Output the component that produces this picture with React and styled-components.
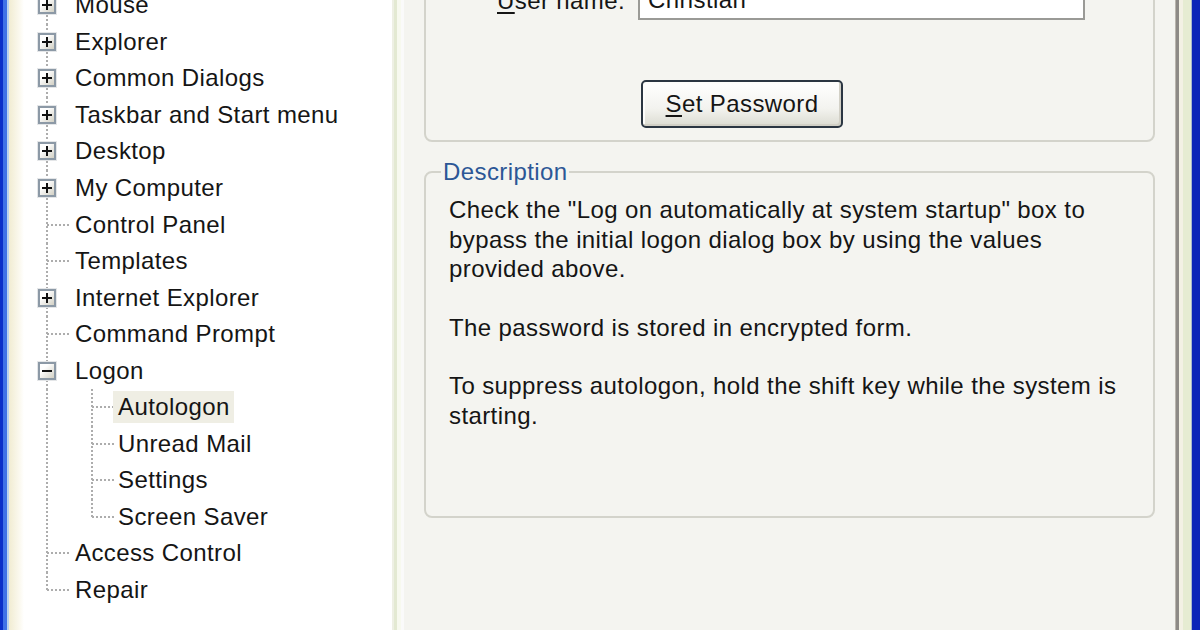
import React from "react";
import styled, { createGlobalStyle } from "styled-components";

const Global = createGlobalStyle`
  html, body { margin: 0; padding: 0; background: #f4f4f0; }
  body { font-family: "Liberation Sans", Arial, sans-serif; }
  #root { width: 1200px; height: 630px; overflow: hidden; }
`;

const Window = styled.div`
  display: flex;
  width: 1200px;
  height: 630px;
  overflow: hidden;
  font-family: "Liberation Sans", Arial, sans-serif;
  font-size: 24px;
  letter-spacing: 0.4px;
  color: #151515;
`;

const FrameLeft = styled.div`
  flex: 0 0 9px;
  background: linear-gradient(to right, #0a2fc8 0 3px, #3f72e6 3px 7px, #b9d3ef 7px 9px);
`;

const FrameInnerLeft = styled.div`
  flex: 0 0 15px;
  background: linear-gradient(to right, #f1ecd2, #fbf9ef 70%, #ffffff);
`;

const TreePanel = styled.div`
  flex: 0 0 368px;
  background: #ffffff;
  overflow: hidden;
`;

const TreeList = styled.ul`
  list-style: none;
  margin: -13px 0 0 0;
  padding: 0;
`;

const Row = styled.li`
  display: flex;
  align-items: center;
  height: 36.55px;
  white-space: nowrap;
`;

const lineColor = "#adadad";
const vFull = `repeating-linear-gradient(to bottom, ${lineColor} 0 2px, transparent 2px 4px)`;
const hLine = `repeating-linear-gradient(to right, ${lineColor} 0 2px, transparent 2px 4px)`;

const Cell = styled.span`
  flex: 0 0 ${(p) => p.$w}px;
  height: 100%;
  display: flex;
  align-items: center;
  justify-content: center;
  background-repeat: no-repeat;
  background-image: ${(p) => {
    const imgs = [];
    if (p.$kind === "pipe" || p.$kind === "tee" || p.$kind === "corner") imgs.push(vFull);
    if (p.$kind === "tee" || p.$kind === "corner") imgs.push(hLine);
    return imgs.length ? imgs.join(", ") : "none";
  }};
  background-size: ${(p) => {
    const s = [];
    if (p.$kind === "pipe" || p.$kind === "tee") s.push("2px 100%");
    if (p.$kind === "corner") s.push("2px 50%");
    if (p.$kind === "tee" || p.$kind === "corner") s.push(`${p.$w / 2}px 2px`);
    return s.join(", ") || "auto";
  }};
  background-position: ${(p) => {
    const s = [];
    const c = `${p.$w / 2 - 1}px`;
    if (p.$kind === "pipe" || p.$kind === "tee" || p.$kind === "corner") s.push(`${c} 0`);
    if (p.$kind === "tee" || p.$kind === "corner") s.push(`${p.$w / 2}px 50%`);
    return s.join(", ") || "0 0";
  }};
`;

const Expander = styled.span`
  position: relative;
  width: 18px;
  height: 18px;
  box-sizing: border-box;
  border: 2px solid #8c99a6;
  box-shadow: 0 0 0 1px #e4e6e8;
  background: linear-gradient(135deg, #ffffff 30%, #d2d0c4);
  display: flex;
  align-items: center;
  justify-content: center;

  &::before {
    content: "";
    width: 10px;
    height: 2px;
    background: #111;
  }
  &::after {
    content: "";
    display: ${(p) => (p.$open ? "none" : "block")};
    position: absolute;
    width: 2px;
    height: 10px;
    left: 6px;
    top: 2px;
    background: #111;
  }
`;

const Label = styled.span`
  padding: 2px 4px 2px 5px;
  margin-left: ${(p) => (p.$child ? "-1px" : "0")};
  background: ${(p) => (p.$selected ? "#efeee4" : "transparent")};
  line-height: 28px;
`;

const Divider = styled.div`
  flex: 0 0 12px;
  background: linear-gradient(to right, #eef0e4 0 2px, #e3e9d2 2px 5px, #f7f9ef 5px 9px, #fafafa 9px);
`;

const RightPanel = styled.div`
  flex: 1 1 auto;
  background: #f4f4f0;
  padding: 0 20px;
  display: flex;
  flex-direction: column;
`;

const FrameRight = styled.div`
  flex: 0 0 25px;
  background: linear-gradient(
    to right,
    #b9b5ad 0 1px,
    #8d8a86 1px 4px,
    #f3f1e4 4px 8px,
    #e6ecd2 8px 16px,
    #a8b6cc 16px 17px,
    #0c24b8 17px
  );
`;

const GroupBox = styled.div`
  margin-top: -50px;
  border: 2px solid #d3d3cb;
  border-radius: 8px;
  padding: 28px 0 12px;
  display: flex;
  flex-direction: column;
  align-items: flex-start;
`;

const FieldRow = styled.div`
  display: flex;
  align-items: center;
  gap: 14px;
  padding-left: 71px;
  height: 40px;
`;

const FieldLabel = styled.label`
  width: 127px;
  white-space: nowrap;
  padding-top: 2px;
`;

const Mnemonic = styled.span`
  text-decoration: underline;
  text-underline-offset: 3px;
`;

const TextInput = styled.div`
  width: 447px;
  height: 40px;
  box-sizing: border-box;
  border: 2px solid #9a9a96;
  background: #ffffff;
  padding: 2px 8px;
  display: flex;
  align-items: center;
`;

const Button = styled.button`
  margin: 60px 0 0 215px;
  width: 202px;
  height: 48px;
  box-sizing: border-box;
  border: 2px solid #2b3642;
  border-radius: 5px;
  background: linear-gradient(to bottom, #ffffff, #f3f3ef 60%, #dcdcd2);
  box-shadow: inset -2px -2px 0 #d2d0c6, inset 2px 2px 0 #fdfdfb;
  font-family: "Liberation Sans", Arial, sans-serif;
  font-size: 24px;
  letter-spacing: 0.4px;
  color: #151515;
  padding: 0;
`;

const DescBox = styled.fieldset`
  margin: 17px 0 0;
  border: 2px solid #d3d3cb;
  border-radius: 8px;
  padding: 10px 14px 0 23px;
  min-width: 0;
  height: 359px;
  box-sizing: border-box;
`;

const Legend = styled.legend`
  color: #2c5796;
  padding: 0 2px;
  margin-left: -8px;
  line-height: 26px;
`;

const Paragraph = styled.p`
  margin: 0 0 29px;
  line-height: 29.5px;
`;

const Line = styled.span`
  display: block;
  white-space: nowrap;
`;

const tree = [
  { label: "Mouse", cells: [{ k: "pipe", box: "closed" }] },
  { label: "Explorer", cells: [{ k: "pipe", box: "closed" }] },
  { label: "Common Dialogs", cells: [{ k: "pipe", box: "closed" }] },
  { label: "Taskbar and Start menu", cells: [{ k: "pipe", box: "closed" }] },
  { label: "Desktop", cells: [{ k: "pipe", box: "closed" }] },
  { label: "My Computer", cells: [{ k: "pipe", box: "closed" }] },
  { label: "Control Panel", cells: [{ k: "tee" }] },
  { label: "Templates", cells: [{ k: "tee" }] },
  { label: "Internet Explorer", cells: [{ k: "pipe", box: "closed" }] },
  { label: "Command Prompt", cells: [{ k: "tee" }] },
  { label: "Logon", cells: [{ k: "pipe", box: "open" }] },
  { label: "Autologon", child: true, selected: true, cells: [{ k: "pipe" }, { k: "tee" }] },
  { label: "Unread Mail", child: true, cells: [{ k: "pipe" }, { k: "tee" }] },
  { label: "Settings", child: true, cells: [{ k: "pipe" }, { k: "tee" }] },
  { label: "Screen Saver", child: true, cells: [{ k: "pipe" }, { k: "corner" }] },
  { label: "Access Control", cells: [{ k: "tee" }] },
  { label: "Repair", cells: [{ k: "corner" }] },
];

const widths = [46, 44];

export default function App() {
  return (
    <>
      <Global />
      <Window>
        <FrameLeft />
        <FrameInnerLeft />
        <TreePanel>
          <TreeList>
            {tree.map((item) => (
              <Row key={item.label}>
                {item.cells.map((c, i) => (
                  <Cell key={i} $kind={c.k} $w={widths[i]}>
                    {c.box && <Expander $open={c.box === "open"} />}
                  </Cell>
                ))}
                <Label $child={item.child} $selected={item.selected}>
                  {item.label}
                </Label>
              </Row>
            ))}
          </TreeList>
        </TreePanel>
        <Divider />
        <RightPanel>
          <GroupBox>
            <FieldRow>
              <FieldLabel>
                <Mnemonic>U</Mnemonic>ser name:
              </FieldLabel>
              <TextInput>Christian</TextInput>
            </FieldRow>
            <Button>
              <Mnemonic>S</Mnemonic>et Password
            </Button>
          </GroupBox>
          <DescBox>
            <Legend>Description</Legend>
            <Paragraph>
              <Line>Check the "Log on automatically at system startup" box to</Line>
              <Line>bypass the initial logon dialog box by using the values</Line>
              <Line>provided above.</Line>
            </Paragraph>
            <Paragraph>
              <Line>The password is stored in encrypted form.</Line>
            </Paragraph>
            <Paragraph>
              <Line>To suppress autologon, hold the shift key while the system is</Line>
              <Line>starting.</Line>
            </Paragraph>
          </DescBox>
        </RightPanel>
        <FrameRight />
      </Window>
    </>
  );
}
